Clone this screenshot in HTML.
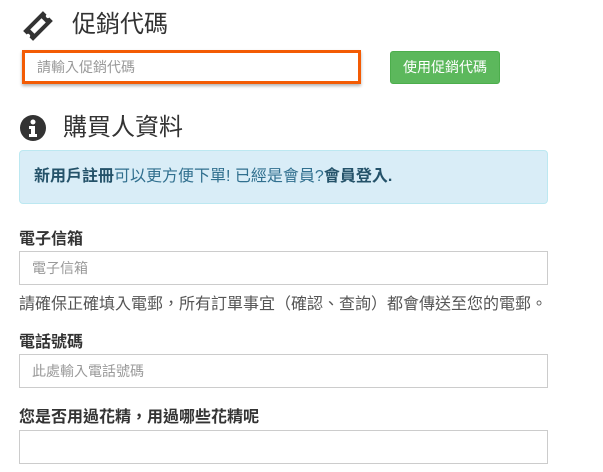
<!DOCTYPE html>
<html><head><meta charset="utf-8"><style>
body{margin:0;width:603px;height:472px;background:#fff;font-family:"Liberation Sans","Noto Sans CJK TC",sans-serif;color:#333;position:relative;overflow:hidden}
.a{position:absolute}
h2{margin:0;font-weight:normal;font-size:24px;color:#333;position:absolute;line-height:1}
.inp{position:absolute;left:19px;width:527px;height:32px;border:1px solid #ccc;box-sizing:content-box;font-size:14px;color:#999;line-height:32px;text-indent:12px}
.lbl{position:absolute;left:19px;font-weight:bold;font-size:16px;color:#333}
</style></head><body>
<svg class="a" style="left:22px;top:10px" width="32" height="32" viewBox="0 0 32 32"><g transform="rotate(-45 16 16)"><path d="M2 9h28v5a2 2 0 0 0 0 4v5H2v-5a2 2 0 0 0 0-4z" fill="#333"/><rect x="8" y="13" width="16" height="6" fill="#fff"/></g></svg>
<h2 style="left:72px;top:13px">促銷代碼</h2>
<div class="a" style="left:22px;top:50px;width:333px;height:28px;border:3px solid #f35b04;box-shadow:0 2px 3px rgba(0,0,0,.3);font-size:14px;color:#999;line-height:28px;text-indent:12px">請輸入促銷代碼</div>
<div class="a" style="left:390px;top:51px;width:110px;height:33px;background:#5cb85c;border:1px solid #4cae4c;box-sizing:border-box;border-radius:3px;color:#fff;font-size:14px;text-align:center;line-height:31px">使用促銷代碼</div>
<svg class="a" style="left:19px;top:114px" width="28" height="28" viewBox="0 0 28 28"><circle cx="14" cy="14" r="13" fill="#333"/><circle cx="14" cy="8" r="2.5" fill="#fff"/><path d="M10 12h6v8h2v3h-8v-3h2v-5h-2z" fill="#fff"/></svg>
<h2 style="left:63px;top:116px">購買人資料</h2>
<div class="a" style="left:19px;top:150px;width:527px;height:52px;background:#d9edf7;border:1px solid #bce8f1;border-radius:4px;color:#31708f;font-size:16px;line-height:52px;text-indent:14px;white-space:nowrap"><b style="color:#245269">新用戶註冊</b>可以更方便下單! 已經是會員?<b style="color:#245269">會員登入.</b></div>
<div class="lbl" style="top:225px">電子信箱</div>
<div class="inp" style="top:251px">電子信箱</div>
<div class="a" style="left:19px;top:290px;font-size:16px;color:#555;white-space:nowrap">請確保正確填入電郵，所有訂單事宜（確認、查詢）都會傳送至您的電郵。</div>
<div class="lbl" style="top:328px">電話號碼</div>
<div class="inp" style="top:354px">此處輸入電話號碼</div>
<div class="lbl" style="top:403px">您是否用過花精，用過哪些花精呢</div>
<div class="inp" style="top:430px"></div>
</body></html>
